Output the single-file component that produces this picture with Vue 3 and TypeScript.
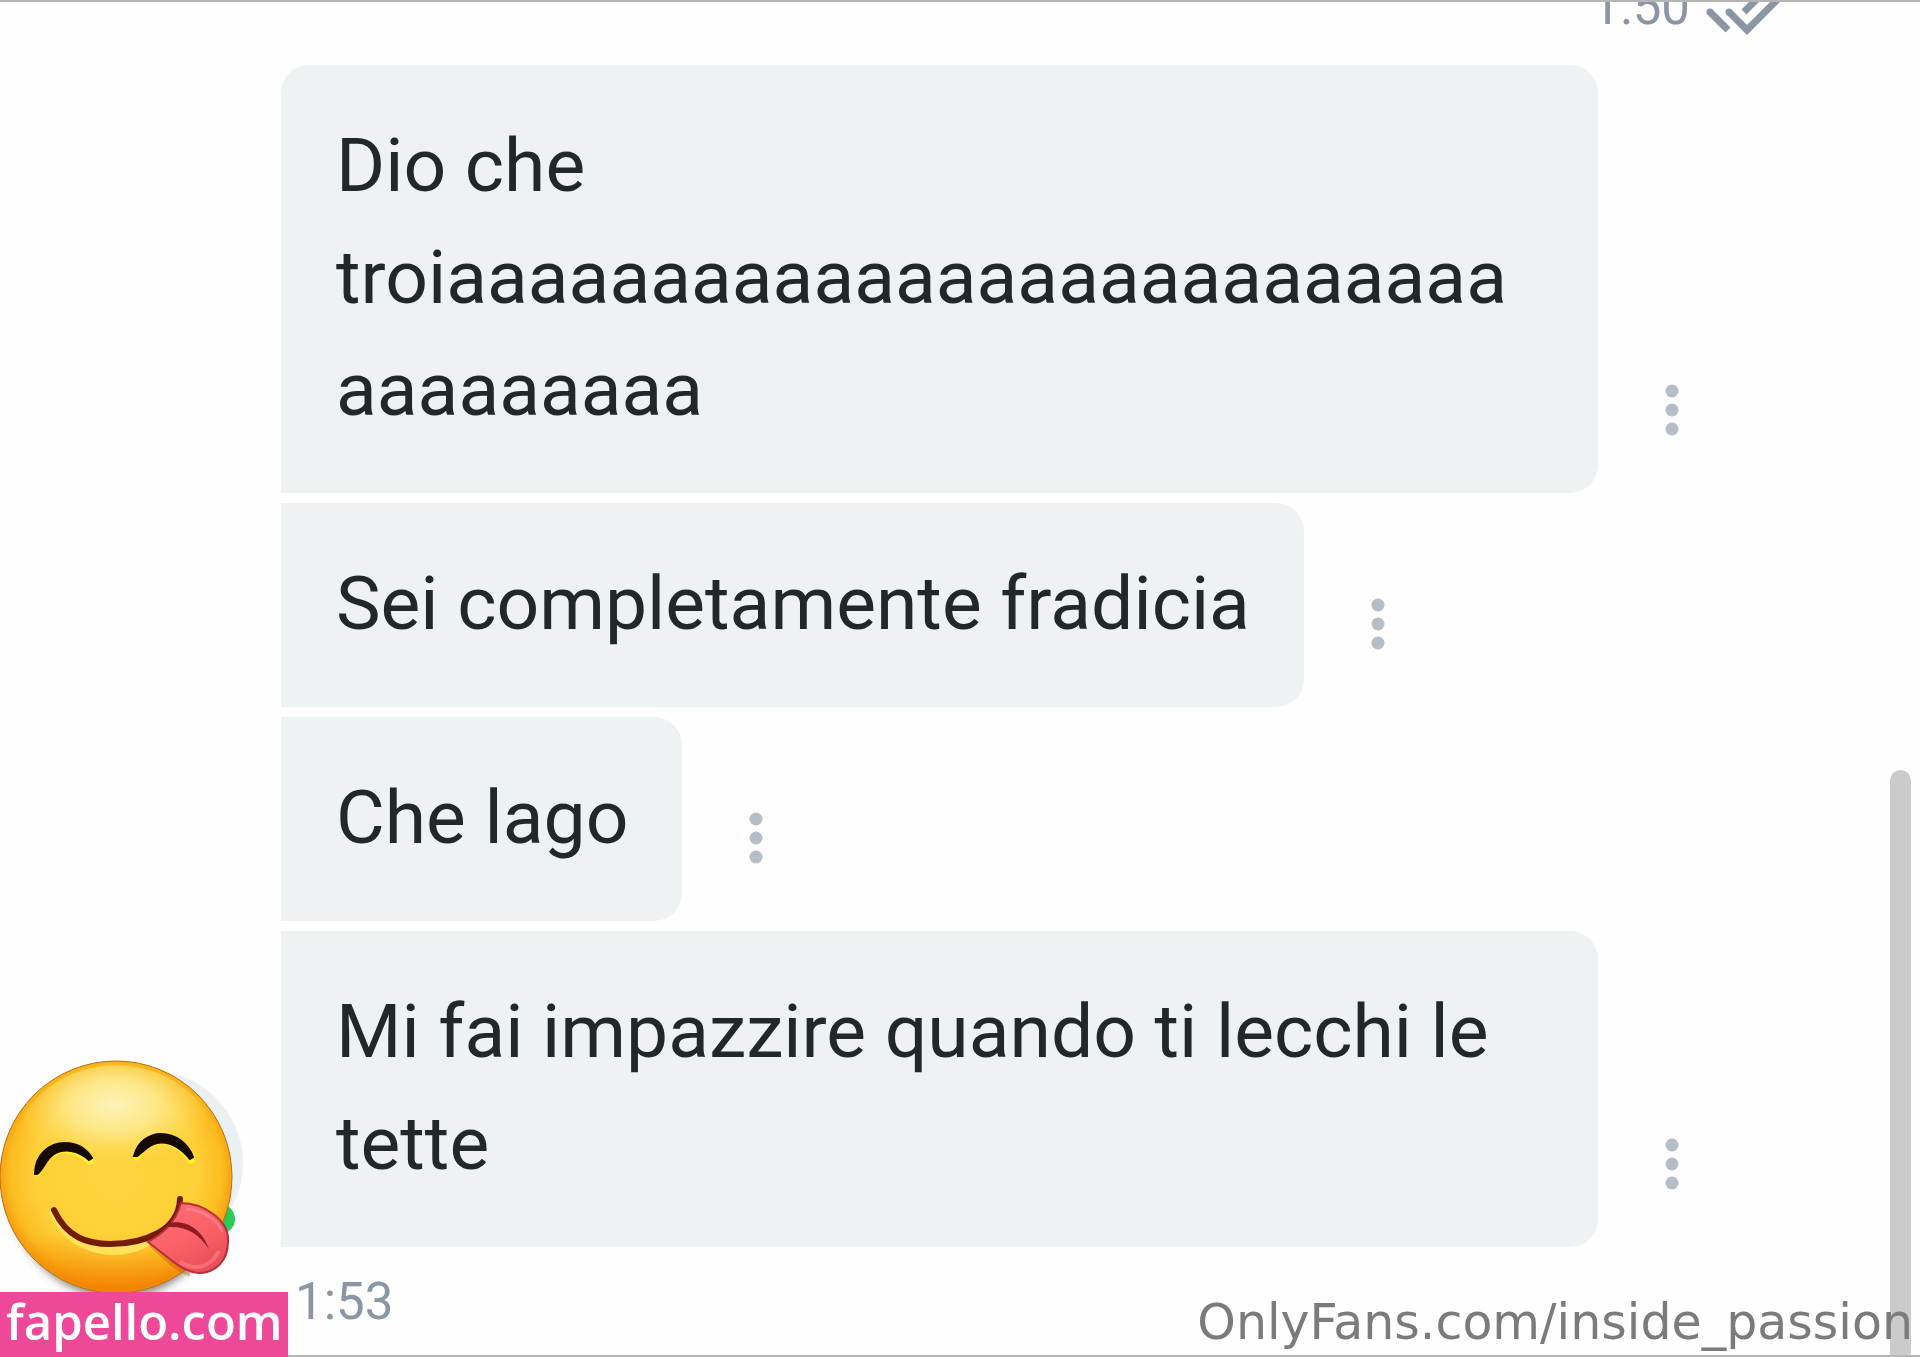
<script setup lang="ts">
interface Message {
  id: number
  text: string
}

const messages: Message[] = [
  { id: 1, text: 'Dio che troi' + 'a'.repeat(35) },
  { id: 2, text: 'Sei completamente fradicia' },
  { id: 3, text: 'Che lago' },
  { id: 4, text: 'Mi fai impazzire quando ti lecchi le tette' },
]
</script>

<template>
  <div class="page">
    <header class="sent">
      <time class="time">1:50</time>
      <svg class="checks" width="76" height="44" viewBox="0 0 76 44" aria-label="Read">
        <g fill="none" stroke="#8a96a3" stroke-width="7">
          <path d="M4 19 22 37" />
          <path d="M23 19 41 37 76 2" />
          <path d="M38 19 58 -1" />
        </g>
        <circle cx="4" cy="19" r="3.5" fill="#8a96a3" />
        <circle cx="23" cy="19" r="3.5" fill="#8a96a3" />
      </svg>
    </header>

    <main class="chat">
      <aside class="person">
        <svg class="avatar" width="244" height="236" viewBox="0 0 244 236" role="img" aria-label="Avatar">
          <defs>
            <radialGradient id="face" cx="0.5" cy="0.48" r="0.54">
              <stop offset="0" stop-color="#fed33b" />
              <stop offset="0.65" stop-color="#fed038" />
              <stop offset="0.85" stop-color="#fcbc20" />
              <stop offset="1" stop-color="#f08a04" />
            </radialGradient>
            <linearGradient id="base" x1="0" y1="0" x2="0" y2="1">
              <stop offset="0.75" stop-color="#f58a00" stop-opacity="0" />
              <stop offset="1" stop-color="#f37b00" stop-opacity="0.85" />
            </linearGradient>
            <radialGradient id="shine" cx="0.5" cy="0.4" r="0.55">
              <stop offset="0" stop-color="#fdf4bd" />
              <stop offset="0.45" stop-color="#fdee9c" stop-opacity="0.75" />
              <stop offset="1" stop-color="#fddc55" stop-opacity="0" />
            </radialGradient>
            <linearGradient id="tongue" x1="0" y1="0" x2="0.6" y2="1">
              <stop offset="0" stop-color="#fb7078" />
              <stop offset="0.6" stop-color="#fb6068" />
              <stop offset="1" stop-color="#e9505a" />
            </linearGradient>
            <filter id="soft" x="-20%" y="-20%" width="140%" height="140%">
              <feGaussianBlur stdDeviation="4" />
            </filter>
            <clipPath id="disc">
              <circle cx="116" cy="119" r="112" />
            </clipPath>
          </defs>
          <circle cx="151" cy="105" r="92" fill="#ebf0f3" />
          <circle cx="220" cy="161" r="15" fill="#2ccb5c" />
          <ellipse cx="117" cy="132" rx="106" ry="108" fill="#38312a" opacity="0.6" filter="url(#soft)" />
          <circle cx="116" cy="119" r="116" fill="url(#face)" stroke="#b97010" stroke-width="1" />
          <circle cx="116" cy="119" r="115" fill="url(#base)" />
          <ellipse cx="114" cy="58" rx="92" ry="56" fill="url(#shine)" clip-path="url(#disc)" />
          <g transform="translate(0 28)">
            <g fill="none" stroke-linecap="round">
              <path d="M37 87C50 59 72 58 90 75M137 71C150 49 173 49 191 74" stroke="#fbee2a" stroke-width="7" />
              <path d="M54 128C77 171 127 172 153 152" stroke="#ffe15a" stroke-width="9" />
            </g>
            <path d="M35 88C35 68 50 57 65 57C78 57 87 64 92 72L89 74C78 64 64 62 54 68C46 73 43 84 37 88Z" fill="#160a00" stroke="#160a00" stroke-width="2" />
            <path d="M134 70C138 55 150 48 161 48C176 48 188 58 193 71L190 73C180 61 168 55 157 57C147 59 143 67 137 70Z" fill="#160a00" stroke="#160a00" stroke-width="2" />
            <path d="M54 124C67 152 88 158 110 158C143 158 179 145 180 113" fill="none" stroke="#731c00" stroke-width="6" stroke-linecap="round" />
            <path d="M151 158C166 172 177 184 190 188" fill="none" stroke="#bd5b05" stroke-width="5" opacity="0.4" />
            <path d="M181 117C203 117 230 134 228 156C228 174 216 187 199 187C181 186 166 169 148 156C162 148 175 138 181 117Z" fill="url(#tongue)" stroke="#b92f39" stroke-width="2" />
            <path d="M186 123C202 124 218 133 222 146" fill="none" stroke="#ff9096" stroke-width="3" opacity="0.6" />
            <path d="M168 137C186 133 202 143 209 163C199 148 187 140 168 141Z" fill="#8f1a20" />
            <path d="M180 176C196 186 212 180 219 165" fill="none" stroke="#ff8187" stroke-width="4" opacity="0.6" />
          </g>
        </svg>
      </aside>

      <section class="thread">
        <div v-for="message in messages" :key="message.id" class="row">
          <p class="bubble">{{ message.text }}</p>
          <button class="more" type="button" aria-label="Message options">
            <svg width="36" height="52" viewBox="0 0 36 52" fill="#b5bdc6">
              <circle cx="18" cy="7" r="6.5" />
              <circle cx="18" cy="26" r="6.5" />
              <circle cx="18" cy="45" r="6.5" />
            </svg>
          </button>
        </div>
        <time class="time received">1:53</time>
      </section>
    </main>

    <div class="scrollbar"></div>
    <div class="site">fapello.com</div>
    <div class="credit">OnlyFans.com/inside_passion</div>
  </div>
</template>

<style>
body {
  margin: 0;
  background: #fefefe;
}
</style>

<style scoped>
.page {
  position: relative;
  box-sizing: border-box;
  min-height: 100vh;
  border-top: 2px solid #b3b6b4;
  border-bottom: 2px solid #b3b6b4;
  background: #fefefe;
  font-family: Roboto, "Liberation Sans", sans-serif;
}

.sent {
  display: flex;
  justify-content: flex-end;
  align-items: flex-end;
  gap: 16px;
  box-sizing: border-box;
  height: 63px;
  padding: 0 138px 28px 0;
  overflow: hidden;
}

.time {
  color: #8a96a3;
  font-size: 51px;
  line-height: 60px;
}

.checks {
  display: block;
  flex: none;
}

.chat {
  display: flex;
}

.person {
  flex: none;
  align-self: flex-end;
  width: 281px;
  margin-bottom: 61px;
}

.avatar {
  display: block;
}

.thread {
  display: flex;
  flex: 1;
  flex-direction: column;
  gap: 10px;
  min-width: 0;
  padding-right: 230px;
}

.row {
  display: flex;
  align-items: flex-end;
  gap: 56px;
}

.bubble {
  min-width: 0;
  margin: 0;
  padding: 44px 54px 48px 55px;
  border-radius: 0 28px 28px 0;
  background: #eef2f3;
  color: #222829;
  font-size: 75px;
  line-height: 112px;
  overflow-wrap: anywhere;
}

.row:first-child .bubble {
  border-top-left-radius: 28px;
}

.more {
  flex: none;
  margin: 0 0 57px;
  padding: 0;
  border: 0;
  background: none;
}

.more svg {
  display: block;
}

.received {
  padding: 15px 14px 23px;
}

.scrollbar {
  position: absolute;
  top: 768px;
  right: 9px;
  bottom: 0;
  width: 21px;
  border-radius: 11px 11px 0 0;
  background: #cbcbcb;
}

.site {
  position: absolute;
  bottom: -2px;
  left: 0;
  padding: 0 5px 7px 6px;
  background: #ee4899;
  color: #fff;
  font-family: "Open Sans", "Noto Sans", sans-serif;
  font-size: 49px;
  font-weight: 600;
  line-height: 58px;
}

.credit {
  position: absolute;
  right: 7px;
  bottom: 2px;
  color: #7b7b7b;
  font-family: "DejaVu Sans", sans-serif;
  font-size: 49px;
  line-height: 60px;
}
</style>
